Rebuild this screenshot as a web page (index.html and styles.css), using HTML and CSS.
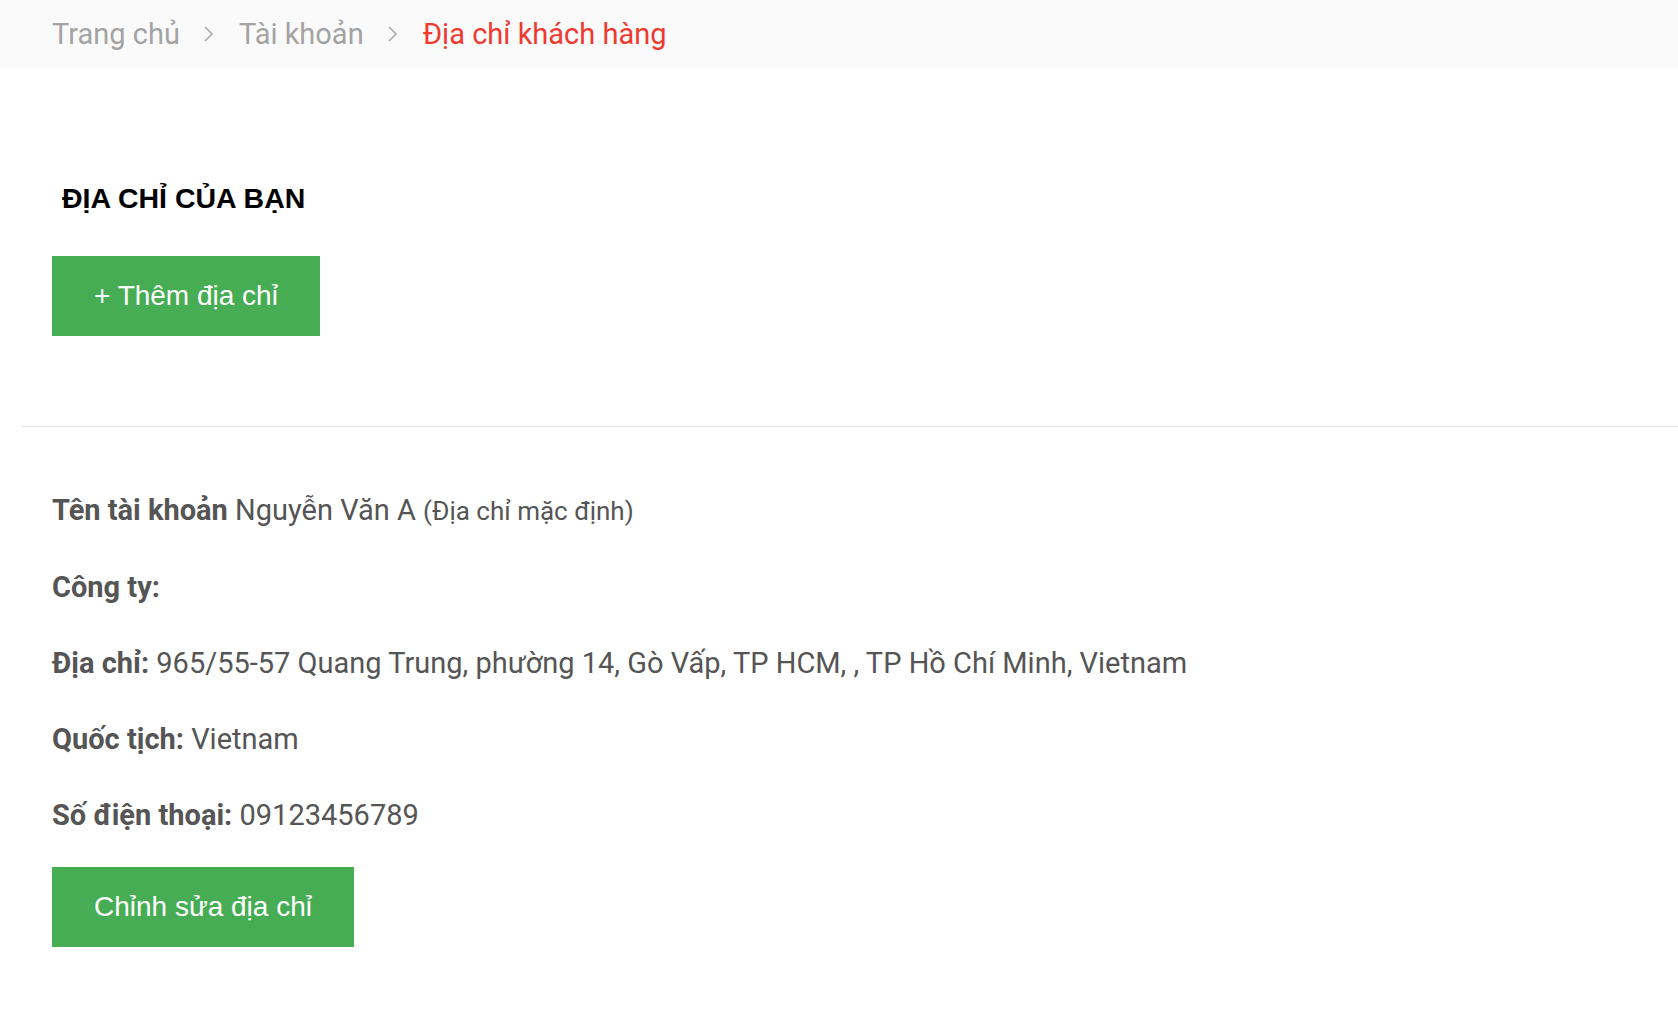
FILE: index.html
```html
<!DOCTYPE html>
<html lang="vi">
<head>
    <meta charset="UTF-8">
    <meta name="viewport" content="width=device-width, initial-scale=1.0">
    <title>Địa chỉ khách hàng</title>
    <link rel="stylesheet" href="styles.css">
</head>
<body>

    <!-- Breadcrumb -->
    <nav class="breadcrumb">
        <a href="#">Trang chủ</a>
        <span class="crumb-sep">
            <svg width="11" height="18" viewBox="0 0 11 18"><polyline points="2,2 9,9 2,16" fill="none" stroke="#a8a8a8" stroke-width="1.6"/></svg>
        </span>
        <a href="#">Tài khoản</a>
        <span class="crumb-sep">
            <svg width="11" height="18" viewBox="0 0 11 18"><polyline points="2,2 9,9 2,16" fill="none" stroke="#a8a8a8" stroke-width="1.6"/></svg>
        </span>
        <span class="crumb-current">Địa chỉ khách hàng</span>
    </nav>

    <main class="page">
        <section class="address-head">
            <h1>ĐỊA CHỈ CỦA BẠN</h1>
            <button class="btn-green" type="button">+ Thêm địa chỉ</button>
        </section>

        <hr class="divider">

        <!-- Default address -->
        <section class="address-card">
            <p><strong>Tên tài khoản</strong> Nguyễn Văn A <small>(Địa chỉ mặc định)</small></p>
            <p><strong>Công ty:</strong></p>
            <p><strong>Địa chỉ:</strong> 965/55-57 Quang Trung, phường 14, Gò Vấp, TP HCM, , TP Hồ Chí Minh, Vietnam</p>
            <p><strong>Quốc tịch:</strong> Vietnam</p>
            <p><strong>Số điện thoại:</strong> 09123456789</p>
            <button class="btn-green" type="button">Chỉnh sửa địa chỉ</button>
        </section>
    </main>

</body>
</html>
```

FILE: styles.css
```css
body {
    margin: 0;
    font-family: 'Roboto', 'Liberation Sans', sans-serif;
    background: #fff;
    color: #555;
}

/* Breadcrumb bar */
.breadcrumb {
    height: 68px;
    background: #fafafa;
    display: flex;
    align-items: center;
    padding-left: 52px;
    font-size: 29px;
}

.breadcrumb a {
    color: #a3a3a3;
    text-decoration: none;
}

.crumb-sep {
    display: flex;
    align-items: center;
    margin: 0 25px 0 23px;
}

.crumb-current {
    color: #f0392f;
}

.page {
    margin-left: 21px;
}

.address-head {
    padding: 113px 0 90px 31px;
}

h1 {
    font-family: 'Liberation Sans', Arial, sans-serif;
    font-size: 28.5px;
    line-height: 34px;
    font-weight: 700;
    color: #000;
    margin: 0 0 41px 10px;
}

.btn-green {
    display: block;
    font-family: 'Liberation Sans', Arial, sans-serif;
    font-size: 28px;
    line-height: 32px;
    color: #fff;
    background: #46ad55;
    border: none;
    border-radius: 0;
    padding: 24px 42px;
    cursor: pointer;
}

.divider {
    border: none;
    border-top: 1px solid #e6e6e6;
    margin: 0;
}

.address-card {
    padding: 62px 0 40px 31px;
    display: flex;
    flex-direction: column;
    align-items: flex-start;
}

.address-card p {
    margin: 0 0 34px;
    font-size: 29px;
    line-height: 42px;
    color: #555;
}

.address-card p:last-of-type {
    margin-bottom: 31px;
}

.address-card strong {
    font-weight: 700;
}

.address-card small {
    font-size: 26px;
}
```
